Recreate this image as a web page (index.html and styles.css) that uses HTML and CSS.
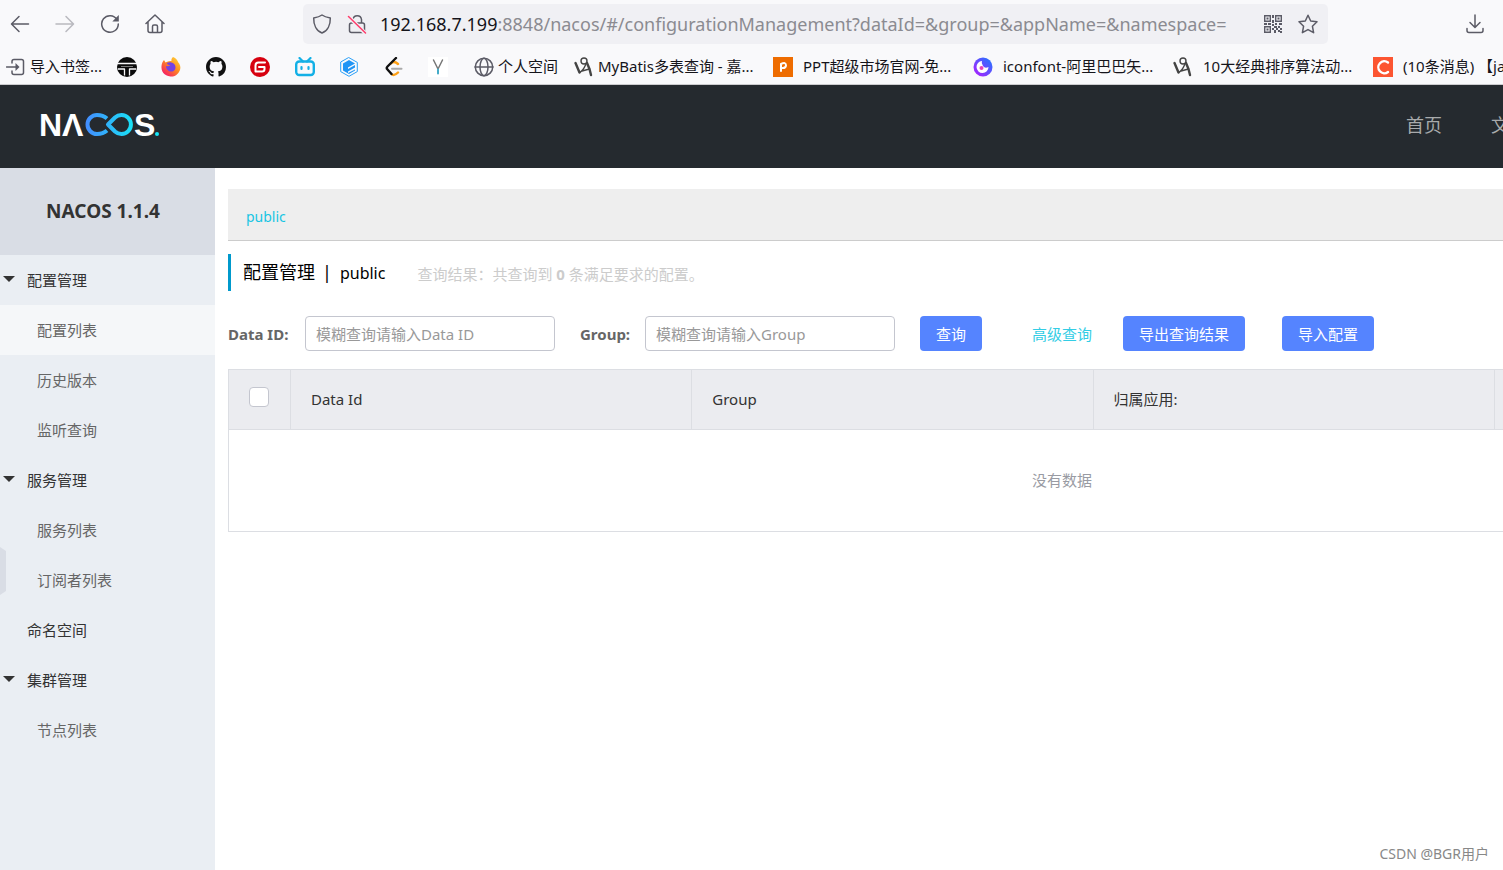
FILE: index.html
```html
<!DOCTYPE html>
<html lang="zh-CN">
<head>
<meta charset="utf-8">
<title>Nacos</title>
<link rel="stylesheet" href="styles.css">
</head>
<body>
<div class="browser">
  <div class="toolbar">
    <div class="nav-buttons">
      <button class="tool" aria-label="后退"><svg class="icon" viewBox="0 0 20 20"><path d="M18.500 10H2M9 2.500L1.500 10L9 17.500"/></svg></button>
      <button class="tool faded" aria-label="前进"><svg class="icon" viewBox="0 0 20 20"><path d="M1 10H18M11 2.500L18.500 10L11 17.500"/></svg></button>
      <button class="tool" aria-label="刷新"><svg class="icon" viewBox="0 0 20 20"><path d="M17 5.500A8.300 8.300 0 1 0 18.300 10"/><path class="solid" d="M18.800 1V7.500H12.300Z"/></svg></button>
      <button class="tool" aria-label="主页"><svg class="icon" viewBox="0 0 20 20"><path d="M1 9.500L10 1L19 9.500M3 8V16.500Q3 18.500 5 18.500H15Q17 18.500 17 16.500V8M7.500 18.500V12.500Q7.500 11 9 11H11Q12.500 11 12.500 12.500V18.500"/></svg></button>
    </div>
    <div class="address">
      <svg class="icon" viewBox="0 0 20 20"><path d="M10 1C12.500 2.800 15.500 3.500 18.300 4C18.500 11 15.500 17 10 19C4.500 17 1.500 11 1.700 4C4.500 3.500 7.500 2.800 10 1Z"/></svg>
      <svg class="icon" viewBox="0 0 20 20"><path d="M6 9V5.500A4.300 4.300 0 0 1 14.500 5.500V9M4.500 9H15.500Q17.500 9 17.500 11V16.500Q17.500 18.500 15.500 18.500H4.500Q2.500 18.500 2.500 16.500V11Q2.500 9 4.500 9Z"/><path class="halo" d="M1 2L19 20"/><path class="slash" d="M1.500 2.500L18.500 19"/></svg>
      <div class="url"><span class="host">192.168.7.199</span>:8848/nacos/#/configurationManagement?dataId=&amp;group=&amp;appName=&amp;namespace=</div>
      <svg class="icon" viewBox="0 0 20 20"><path class="thin" d="M1.700 1.700H7.300V7.300H1.700ZM12.700 1.700H18.300V7.300H12.700ZM1.700 12.700H7.300V18.300H1.700Z"/><path class="solid" d="M3.500 3.500h2v2h-2zM14.500 3.500h2v2h-2zM3.500 14.500h2v2h-2zM9 1h2v3h-2zM9 6h2v3h-2zM1 9h3v2h-3zM5 9h3v2h-3zM9 10h2v2h-2zM12 9h2v2h-2zM16 9h3v2h-3zM11 12h3v2h-3zM15 12h2v2h-2zM9 14h2v2h-2zM13 14h2v2h-2zM17 14h2v2h-2zM11 16h2v3h-2zM15 16h2v2h-2zM17 17h2v2h-2z"/></svg>
      <svg class="icon" viewBox="0 0 20 20"><path d="M10 1.200L12.700 7L19 7.800L14.400 12.200L15.600 18.700L10 15.600L4.400 18.700L5.600 12.200L1 7.800L7.300 7Z"/></svg>
    </div>
    <button class="tool download" aria-label="下载"><svg class="icon" viewBox="0 0 20 20"><path d="M10 1V13M5 8.500L10 13.500L15 8.500M2 14.500V16.500Q2 18.500 4 18.500H16Q18 18.500 18 16.500V14.500"/></svg></button>
  </div>
  <div class="bookmarks">
    <a class="bookmark short import" href="#"><svg class="icon" viewBox="0 0 20 20"><path d="M6 6V4.500Q6 2.500 8 2.500H15.500Q17.500 2.500 17.500 4.500V15.500Q17.500 17.500 15.500 17.500H8Q6 17.500 6 15.500V14M.500 10H11"/><path class="solid" d="M9.500 6L13.500 10L9.500 14Z"/></svg><span>导入书签...</span></a>
    <div class="icon-links">
      <a href="#" aria-label="T"><svg class="icon" viewBox="0 0 20 20"><circle cx="10" cy="10" r="10" fill="#0b0b0b" stroke="none"/><path d="M0 6.500H20M1 12H7.500V18.500M12.500 18.500V12H19" stroke="#f9f9fb" stroke-width="1.300" stroke-linecap="butt"/><path d="M4 9.500H16" stroke="#777" stroke-width="1" stroke-linecap="butt"/></svg></a>
      <a href="#" aria-label="Firefox"><svg class="icon" viewBox="0 0 20 20"><defs><linearGradient id="fx" x1="1" y1="0" x2="0.200" y2="1"><stop offset="0" stop-color="#ffe03c"/><stop offset="0.500" stop-color="#ff8a20"/><stop offset="1" stop-color="#f5156c"/></linearGradient></defs><path fill="url(#fx)" stroke="none" d="M12 0C15 1 17 4 17 5C19 7 20 10 19 13C17 18 13 20 9.500 19.500C3 19 0 14 .500 9C.800 6 2 4 3 3L4.500 5.500C7 4 9 4 10.500 4C10 2.500 11 1 12 0Z"/><path d="M6 6C9 4 15 6 14.500 11C13 17 5 15 5 9Q7 10 9.500 8Q6 8 6 6Z" fill="#7543e3" stroke="none"/></svg></a>
      <a href="#" aria-label="GitHub"><svg class="icon" viewBox="0 0 16 16"><path fill="#111" stroke="none" d="M8 0C3.580 0 0 3.580 0 8c0 3.540 2.290 6.530 5.470 7.590.4.070.55-.17.55-.38 0-.19-.01-.82-.01-1.490-2.010.37-2.530-.49-2.690-.94-.09-.23-.48-.94-.82-1.130-.28-.15-.68-.52-.01-.53.63-.01 1.080.58 1.230.82.72 1.210 1.870.87 2.330.66.07-.52.28-.87.51-1.070-1.780-.2-3.640-.89-3.640-3.950 0-.87.31-1.590.82-2.150-.08-.2-.36-1.020.08-2.120 0 0 .67-.21 2.200.82a7.600 7.600 0 0 1 4 0c1.530-1.040 2.200-.82 2.200-.82.44 1.100.16 1.920.08 2.120.51.56.82 1.270.82 2.150 0 3.070-1.870 3.750-3.650 3.950.29.25.54.73.54 1.480 0 1.070-.01 1.930-.01 2.200 0 .21.15.46.55.38A8.010 8.010 0 0 0 16 8c0-4.420-3.580-8-8-8Z"/></svg></a>
      <a href="#" aria-label="Gitee"><svg class="icon" viewBox="0 0 20 20"><circle cx="10" cy="10" r="10" fill="#d7000f" stroke="none"/><path d="M15 5.500H8.500Q5.500 5.500 5.500 8.500V14.500H12Q14.500 14.500 14.500 12V10H9" stroke="#fff" stroke-width="2"/></svg></a>
      <a href="#" aria-label="哔哩哔哩"><svg class="icon" viewBox="0 0 20 20"><rect x="1.200" y="4.500" width="17.600" height="13.500" rx="3" fill="none" stroke="#13b0e6" stroke-width="2.400"/><path d="M4.500 1L8 4.500M15.500 1L12 4.500M6.500 10V12M13.500 10V12" stroke="#13b0e6" stroke-width="2.200"/></svg></a>
      <a href="#" aria-label="E"><svg class="icon" viewBox="0 0 20 20"><path d="M10 .700L18.300 5.400V14.600L10 19.300L1.700 14.600V5.400Z" stroke="#2ba0f7" stroke-width="1"/><path d="M10 3L16 6.500L9 10.500V12L16 8V10.500L9 14.500V16L16 12.500V13.500L10 17L4 13.500V6.500Z" fill="#2095f5" stroke="none"/></svg></a>
      <a href="#" aria-label="力扣"><svg class="icon" viewBox="0 0 20 20"><path d="M7 6.500Q10 3.500 14 7M7.500 17Q10 19.500 14 15.500" stroke="#ffa116" stroke-width="2.400"/><path d="M12 1L3.500 9.500Q2 11 3.500 12.500L7.500 17" stroke="#111" stroke-width="2.400"/><path d="M8 11.700H17.500" stroke="#aaa" stroke-width="2"/></svg></a>
      <a href="#" aria-label="Y"><svg class="icon" viewBox="0 0 20 20"><rect width="20" height="20" fill="#fff" stroke="none"/><path d="M5.500 3L10 12L14.500 3" stroke="#777"/><path d="M10 12.500V16.500" stroke="#43abc9" stroke-width="2"/></svg></a>
    </div>
    <a class="bookmark tiny" href="#"><svg class="icon" viewBox="0 0 20 20"><circle cx="10" cy="10" r="8.700"/><ellipse cx="10" cy="10" rx="4" ry="8.700"/><path d="M1 10H19"/></svg><span>个人空间</span></a>
    <a class="bookmark medium" href="#"><svg class="icon" viewBox="0 0 20 20"><path class="doodle" d="M1.500 6L5.500 15.500"/><path class="doodle fine" d="M5.500 15.500Q9 14 12 7M8 14L15.500 12"/><circle class="doodle fine" cx="10" cy="4" r="3"/><path class="doodle" d="M13 6L15.500 12L17 18"/></svg><span>MyBatis多表查询 - 嘉...</span></a>
    <a class="bookmark" href="#"><svg class="icon" viewBox="0 0 20 20"><rect width="20" height="20" fill="#ee6c00" stroke="none"/><path d="M8 14V7Q13 4.500 13 8.500Q12.500 11.500 9 11" stroke="#fff" stroke-width="2"/></svg><span>PPT超级市场官网-免...</span></a>
    <a class="bookmark" href="#"><svg class="icon" viewBox="0 0 20 20"><defs><linearGradient id="iconfont" x1="1" y1="0" x2="0" y2="1"><stop offset="0" stop-color="#197bff"/><stop offset="1" stop-color="#b719ff"/></linearGradient></defs><circle cx="10" cy="10" r="9.500" fill="url(#iconfont)" stroke="none"/><path d="M9 4A6 6 0 1 0 15.500 10Q12 12 10 9Q8 6 9 4Z" fill="#fff" stroke="none"/><circle cx="8.500" cy="11" r="2" fill="#e743b8" stroke="none"/></svg><span>iconfont-阿里巴巴矢...</span></a>
    <a class="bookmark" href="#"><svg class="icon" viewBox="0 0 20 20"><path class="doodle" d="M1.500 6L5.500 15.500"/><path class="doodle fine" d="M5.500 15.500Q9 14 12 7M8 14L15.500 12"/><circle class="doodle fine" cx="10" cy="4" r="3"/><path class="doodle" d="M13 6L15.500 12L17 18"/></svg><span>10大经典排序算法动...</span></a>
    <a class="bookmark" href="#"><svg class="icon" viewBox="0 0 20 20"><rect width="20" height="20" fill="#fc5531" stroke="none"/><path d="M15 5.500A6 6 0 1 0 15 15" stroke="#fff" stroke-width="2.400"/></svg><span>(10条消息) 【java</span></a>
  </div>
</div>
<header class="site-header">
  <svg class="logo" viewBox="0 0 120 26" role="img" aria-label="NACOS">
    <defs><linearGradient id="loop" gradientUnits="userSpaceOnUse" x1="44" y1="0" x2="94" y2="0"><stop offset="0" stop-color="#448bff"/><stop offset="1" stop-color="#17e5f5"/></linearGradient></defs>
    <text x="-2" y="24">N</text><text x="21" y="24">Λ</text>
    <path d="M66 6.500Q62 3 56 3A9.500 9.500 0 0 0 56 22Q62 22 66 18.500M67 12.500L74 5.500A9.500 9.500 0 1 1 74 19.500Z"/>
    <text x="93" y="24">S</text><circle cx="116" cy="22" r="2"/>
  </svg>
  <nav class="site-nav"><a href="#">首页</a><a href="#">文档</a></nav>
</header>
<div class="layout">
  <aside class="sidebar">
    <h1 class="version">NACOS 1.1.4</h1>
    <nav class="menu">
      <button class="group open">配置管理</button>
      <a class="entry current" href="#">配置列表</a>
      <a class="entry" href="#">历史版本</a>
      <a class="entry" href="#">监听查询</a>
      <button class="group open">服务管理</button>
      <a class="entry" href="#">服务列表</a>
      <a class="entry" href="#">订阅者列表</a>
      <a class="group" href="#">命名空间</a>
      <button class="group open">集群管理</button>
      <a class="entry" href="#">节点列表</a>
    </nav>
    <button class="collapse" aria-label="收起菜单"></button>
  </aside>
  <main class="content">
    <div class="namespaces"><a href="#">public</a></div>
    <div class="heading"><h2>配置管理<span class="divider">|</span><span class="space-name">public</span></h2><p>查询结果：共查询到 <b>0</b> 条满足要求的配置。</p></div>
    <form class="filters">
      <label class="data-label" for="data-id">Data ID:</label>
      <input class="field" id="data-id" type="text" placeholder="模糊查询请输入Data ID">
      <label class="group-label" for="group">Group:</label>
      <input class="field" id="group" type="text" placeholder="模糊查询请输入Group">
      <button class="primary" type="button">查询</button>
      <a class="advanced" href="#">高级查询</a>
      <button class="primary export" type="button">导出查询结果</button>
      <button class="primary" type="button">导入配置</button>
    </form>
    <table class="results">
      <thead><tr><th class="pick"><input type="checkbox" aria-label="全选"></th><th>Data Id</th><th>Group</th><th>归属应用:</th><th>操作</th></tr></thead>
      <tbody><tr><td colspan="5">没有数据</td></tr></tbody>
    </table>
  </main>
</div>
<div class="watermark">CSDN @BGR用户</div>
</body>
</html>
```
FILE: styles.css
```css
* { box-sizing: border-box; }
body {
  margin: 0;
  min-height: 100vh;
  display: flex;
  flex-direction: column;
  overflow: hidden;
  background: #fff;
  color: #333;
  font: 15px/20px "Noto Sans", "Noto Sans CJK SC", sans-serif;
}
a { color: inherit; text-decoration: none; }
button { border: 0; padding: 0; background: none; color: inherit; font: inherit; text-align: left; }
h1, h2, p { margin: 0; }

.browser { background: #f9f9fb; border-bottom: 1px solid #cccccf; color: #15141a; }
.icon { display: block; flex: none; width: 20px; height: 20px; fill: none; stroke: #5b5b66; stroke-width: 1.5; stroke-linecap: round; stroke-linejoin: round; }
.icon .solid { fill: #5b5b66; stroke: none; }
.icon .thin { stroke-width: 1.4; stroke-linejoin: miter; }
.icon .halo { stroke: #f0f0f4; stroke-width: 4; }
.icon .slash { stroke: #ff3b6b; stroke-width: 1.5; }
.icon .doodle { stroke: #444; stroke-width: 2.4; }
.icon .fine { stroke-width: 1.4; }
.toolbar { display: flex; align-items: center; height: 48px; padding: 0 18px 0 10px; }
.nav-buttons { display: flex; gap: 25px; }
.faded { opacity: 0.4; }
.address { display: flex; align-items: center; gap: 15px; flex: 0 1 1025px; min-width: 0; height: 40px; margin-left: 138px; padding: 0 10px 0 9px; border-radius: 5px; background: #f0f0f4; }
.url { flex: 1; min-width: 0; margin-left: -2px; overflow: hidden; white-space: nowrap; font-size: 18px; line-height: 26px; color: #8b8b91; }
.host { color: #15141a; }
.download { margin-left: auto; }
.bookmarks { display: flex; align-items: center; height: 36px; padding-left: 6px; overflow: hidden; white-space: nowrap; }
.bookmarks .icon { margin-top: 2px; }
.bookmark { display: flex; flex: none; align-items: center; gap: 10px; width: 200px; }
.bookmark.short { gap: 4px; width: 111px; }
.bookmark.tiny { gap: 4px; width: 100px; }
.bookmark.medium { gap: 4px; width: 199px; }
.icon-links { display: flex; flex: none; justify-content: space-between; width: 331px; margin-right: 26px; }

.site-header { display: flex; align-items: center; justify-content: space-between; height: 83px; padding: 0 0 4px 41px; background: #252a2f; }
.logo { width: 120px; height: 26px; overflow: visible; }
.logo text { fill: #fff; font: bold 32px "Liberation Sans", sans-serif; }
.logo path { fill: none; stroke: url(#loop); stroke-width: 4; stroke-linejoin: round; }
.logo circle { fill: #17e5f5; }
.site-nav { display: flex; gap: 49px; width: 97px; overflow: hidden; white-space: nowrap; color: #a8aaac; font-size: 18px; line-height: 26px; }
.site-nav a { flex: none; }

.layout { display: flex; flex: 1; }
.sidebar { position: relative; flex: none; width: 215px; background: #eaeef3; }
.version { padding: 30px 9px 31px 0; background: #d9dde5; text-align: center; font-size: 19px; line-height: 26px; }
.menu { display: flex; flex-direction: column; }
.group, .entry { display: flex; align-items: center; height: 50px; padding-left: 27px; }
.entry { padding-left: 37px; color: #666; }
.current { background: #f5f7f9; }
.open { padding-left: 3px; }
.open::before { content: ""; width: 12px; height: 6px; margin: 0 12px 2px 0; background: #333; clip-path: polygon(0 0, 100% 0, 50% 100%); }
.collapse { position: absolute; left: 0; top: 379px; width: 6px; height: 48px; background: #d9dde5; clip-path: polygon(0 0, 100% 4px, 100% 44px, 0 100%); }

.content { flex: 1; min-width: 0; padding: 21px 0 0 13px; overflow: hidden; }
.namespaces { padding: 18px 18px 13px; border-bottom: 1px solid #ccc; background: #eee; color: #17c5e3; font-size: 14px; }
.heading { display: flex; align-items: center; gap: 32px; height: 37px; margin-top: 13px; padding-left: 12px; border-left: 3px solid #09c; white-space: nowrap; }
.heading h2 { color: #000; font-size: 18px; font-weight: 400; line-height: 26px; }
.divider { margin: 0 8px 0 7px; }
.space-name { font-size: 16px; }
.heading p { color: #ccc; padding-top: 3px; }
.filters { display: flex; align-items: center; height: 35px; margin: 25px 0 18px; white-space: nowrap; }
.filters label { flex: none; color: #666; font-weight: 700; }
.data-label { width: 77px; }
.group-label { width: 65px; }
.field { flex: none; width: 250px; height: 35px; margin-right: 25px; padding: 0 10px; border: 1px solid #c4c6cf; border-radius: 4px; background: #fff; color: #333; font: inherit; }
.field::placeholder { color: #999; opacity: 1; }
.primary { flex: none; height: 35px; padding: 0 16px; border-radius: 4px; background: #5584ff; color: #fff; }
.advanced { margin: 0 31px 0 50px; color: #33cde5; }
.export { margin-right: 37px; }
.results { width: 100%; min-width: 1668px; table-layout: fixed; border-collapse: collapse; }
.results th, .results td { border: 1px solid #dcdee3; font-weight: 400; }
.results th { padding: 19px 20px 20px; background: #ebecf0; text-align: left; }
.results .pick { width: 62px; padding: 0 20px; }
.results td { padding: 40px 0 41px; color: #999ba3; text-align: center; }
.pick input { display: block; appearance: none; width: 20px; height: 20px; margin: 0 0 5px; border: 1px solid #c4c6cf; border-radius: 4px; background: #fff; }

.watermark { position: absolute; right: 14px; bottom: 6px; color: #888; font-size: 14px; }
```
